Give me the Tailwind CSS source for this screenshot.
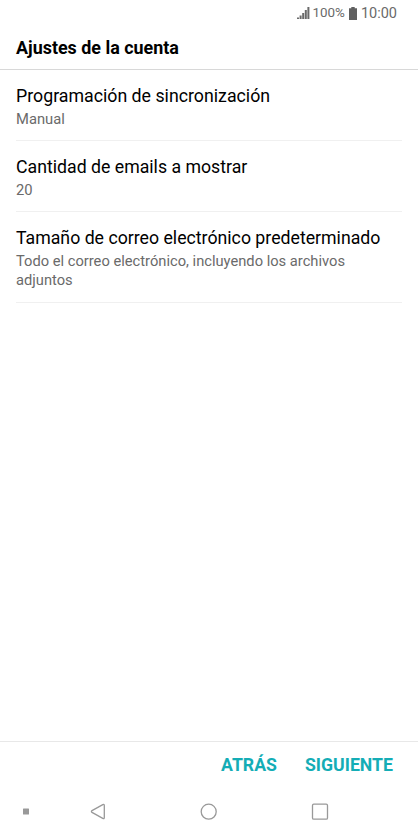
<!DOCTYPE html>
<html lang="es">
  <head>
    <meta charset="UTF-8" />
    <meta name="viewport" content="width=device-width, initial-scale=1.0" />
    <title>Ajustes de la cuenta</title>
    <script src="https://cdn.jsdelivr.net/npm/@tailwindcss/browser@4"></script>
  </head>
  <body class="bg-white font-['Roboto',sans-serif] text-black">
    <div class="flex flex-col w-[418px] h-[836px] overflow-hidden">
      <!-- Status bar -->
      <div class="flex items-center justify-end h-[26px] pr-[21px] text-[#6a6a6a]">
        <svg class="w-[13px] h-3 mr-[3px]" viewBox="0 0 13 12" fill="currentColor">
          <path d="M0 10.5h2V12H0zM2.6 8.5h2V12h-2zM5.2 6h2v6h-2zM7.8 3h2v9h-2zM10.4 0h2v12h-2z" />
        </svg>
        <span class="text-[13.4px]">100%</span>
        <svg class="w-2 h-[13px] mx-1" viewBox="0 0 8 13" fill="#606060">
          <path d="M2.3 0h3.4v1.2H8V13H0V1.2h2.3z" />
        </svg>
        <span class="text-[14.5px] leading-6 pt-px">10:00</span>
      </div>

      <header class="flex items-center h-11 px-4 pt-px border-b border-[#d8d8d8]">
        <h1 class="text-[17.9px] font-bold">Ajustes de la cuenta</h1>
      </header>

      <main class="flex-1 px-4">
        <div class="h-[71px] pt-[14px] border-b border-[#f0f0f0]">
          <p class="text-[17.75px] leading-6">Programación de sincronización</p>
          <p class="text-[14.75px] leading-[23px] text-[#6a6a6a]">Manual</p>
        </div>
        <div class="h-[71px] pt-[14px] border-b border-[#f0f0f0]">
          <p class="text-[17.72px] leading-6">Cantidad de emails a mostrar</p>
          <p class="text-[14.75px] leading-[23px] text-[#6a6a6a]">20</p>
        </div>
        <div class="h-[91px] pt-[14px] border-b border-[#f0f0f0]">
          <p class="text-[17.72px] leading-6">Tamaño de correo electrónico predeterminado</p>
          <p class="pt-0.5 text-[14.7px] leading-[19px] text-[#6a6a6a]">Todo el correo electrónico, incluyendo los archivos adjuntos</p>
        </div>
      </main>

      <footer class="flex items-center justify-end gap-7 h-[47px] pr-[25px] border-t border-[#e8e8e8] text-[17.7px] font-bold text-[#14adb6]">
        <button>ATRÁS</button>
        <button>SIGUIENTE</button>
      </footer>

      <!-- Navigation bar -->
      <nav class="h-12">
        <svg class="w-full h-full" viewBox="0 0 418 48" fill="none" stroke="#999" stroke-width="1.3">
          <rect x="23" y="20.5" width="6" height="6" rx="0.5" fill="#999" stroke="none" />
          <path d="M102.8 16.6Q104.3 15.9 104.3 17.5V29.5Q104.3 31.2 102.8 30.4L92 24.4Q90.8 23.5 92 22.6z" />
          <circle cx="208.7" cy="23.7" r="7.5" />
          <rect x="312.5" y="16.2" width="15" height="15" rx="1.3" />
        </svg>
      </nav>
    </div>
  </body>
</html>
